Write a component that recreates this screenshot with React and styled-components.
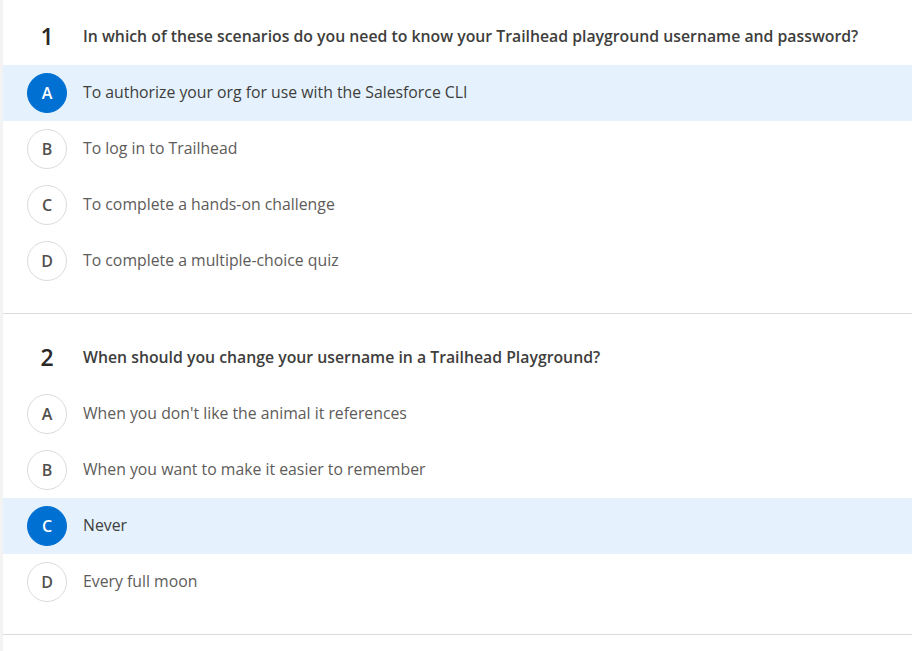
import styled, { createGlobalStyle } from 'styled-components';

const GlobalStyle = createGlobalStyle`
    body{
        margin: 0;
        background: #ffffff;
        font-family: "Open Sans", "Noto Sans", sans-serif;
    }
`;

const Page = styled.div`
    border-left: 3px solid #f3f3f3;
    min-height: 651px;
    box-sizing: border-box;
`;

const Section = styled.section`
    padding: 16px 0 24px;
    border-bottom: 1px solid #dddbda;

    &:first-child{
        padding-top: 9px;
        padding-bottom: 24px;
    }
`;

const Header = styled.div`
    display: flex;
    align-items: center;
    gap: 16px;
    height: 56px;
    padding-left: 24px;
`;

const Number = styled.div`
    width: 40px;
    text-align: center;
    font-size: 23px;
    font-weight: 600;
    color: #2b2826;
    margin-bottom: 2px;
`;

const Question = styled.div`
    font-size: 15.8px;
    font-weight: 600;
    color: #3e3e3c;
    margin-bottom: 3px;
`;

const Row = styled.div`
    display: flex;
    align-items: center;
    gap: 16px;
    height: 56px;
    padding-left: 24px;
    background: ${p => p.$selected ? '#e5f2fd' : 'transparent'};
`;

const Letter = styled.div`
    width: 40px;
    height: 40px;
    box-sizing: border-box;
    border-radius: 50%;
    display: flex;
    align-items: center;
    justify-content: center;
    font-size: 16px;
    font-weight: 600;
    border: 1px solid ${p => p.$selected ? '#0070d2' : '#dddbda'};
    background: ${p => p.$selected ? '#0070d2' : '#ffffff'};
    color: ${p => p.$selected ? '#ffffff' : '#514f4d'};
`;

const Answer = styled.div`
    font-size: 15.8px;
    color: ${p => p.$selected ? '#3e3e3c' : '#5e5c5a'};
    margin-bottom: 3px;
`;

const questions = [
    {
        num: 1,
        text: 'In which of these scenarios do you need to know your Trailhead playground username and password?',
        selected: 'A',
        answers: [
            'To authorize your org for use with the Salesforce CLI',
            'To log in to Trailhead',
            'To complete a hands-on challenge',
            'To complete a multiple-choice quiz',
        ],
    },
    {
        num: 2,
        text: 'When should you change your username in a Trailhead Playground?',
        selected: 'C',
        answers: [
            "When you don't like the animal it references",
            'When you want to make it easier to remember',
            'Never',
            'Every full moon',
        ],
    },
];

const letters = ['A', 'B', 'C', 'D'];

const App = () => {
    return (
        <Page>
            <GlobalStyle />
            {questions.map(q => (
                <Section key={q.num}>
                    <Header>
                        <Number>{q.num}</Number>
                        <Question>{q.text}</Question>
                    </Header>
                    {q.answers.map((a, i) => {
                        const sel = q.selected === letters[i];
                        return (
                            <Row key={a} $selected={sel}>
                                <Letter $selected={sel}>{letters[i]}</Letter>
                                <Answer $selected={sel}>{a}</Answer>
                            </Row>
                        );
                    })}
                </Section>
            ))}
        </Page>
    );
}

export default App;
